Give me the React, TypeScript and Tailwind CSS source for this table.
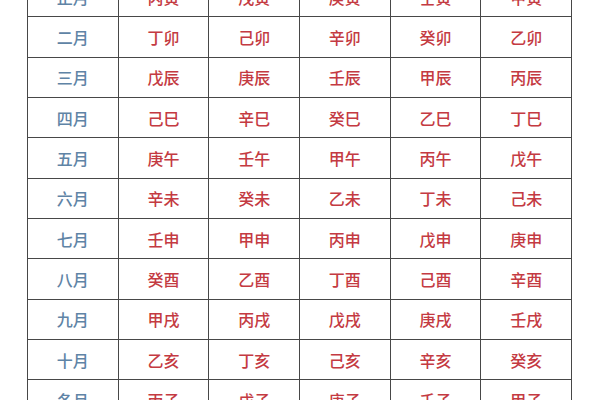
const rows: [string, string[]][] = [
  ['正月', ['丙寅', '戊寅', '庚寅', '壬寅', '甲寅']],
  ['二月', ['丁卯', '己卯', '辛卯', '癸卯', '乙卯']],
  ['三月', ['戊辰', '庚辰', '壬辰', '甲辰', '丙辰']],
  ['四月', ['己巳', '辛巳', '癸巳', '乙巳', '丁巳']],
  ['五月', ['庚午', '壬午', '甲午', '丙午', '戊午']],
  ['六月', ['辛未', '癸未', '乙未', '丁未', '己未']],
  ['七月', ['壬申', '甲申', '丙申', '戊申', '庚申']],
  ['八月', ['癸酉', '乙酉', '丁酉', '己酉', '辛酉']],
  ['九月', ['甲戌', '丙戌', '戊戌', '庚戌', '壬戌']],
  ['十月', ['乙亥', '丁亥', '己亥', '辛亥', '癸亥']],
  ['冬月', ['丙子', '戊子', '庚子', '壬子', '甲子']],
]

export default function App() {
  return (
    <div
      className="w-[600px] h-[400px] overflow-hidden bg-white"
      style={{ fontFamily: '"Noto Sans CJK SC", "Noto Sans", sans-serif' }}
    >
      <div className="ml-[27px] -mt-[23px] w-[545px] grid grid-cols-6 border-l border-[#474747]">
        {rows.map(([month, cells]) => (
          <div key={month} className="contents">
            <div className="h-[40.33px] flex items-center justify-center border-r border-b border-[#474747] text-[16px] font-medium text-[#5f84a6]">
              {month}
            </div>
            {cells.map((c) => (
              <div
                key={c}
                className="h-[40.33px] flex items-center justify-center border-r border-b border-[#474747] text-[16px] font-medium text-[#c43a42]"
              >
                {c}
              </div>
            ))}
          </div>
        ))}
      </div>
    </div>
  )
}
